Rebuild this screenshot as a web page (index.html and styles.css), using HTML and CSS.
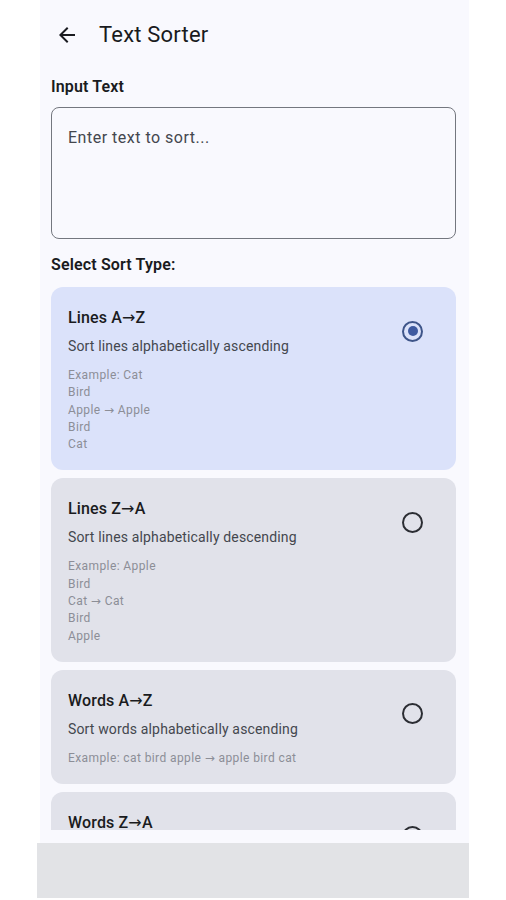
FILE: index.html
```html
<!DOCTYPE html>
<html lang="en">
<head>
<meta charset="utf-8">
<title>Text Sorter</title>
<link rel="stylesheet" href="styles.css">
</head>
<body>
<div class="app">
  <header class="topbar">
    <span class="back" aria-label="Back">
      <svg viewBox="0 0 24 24" width="24" height="24"><path d="M20 11H7.83l5.59-5.59L12 4l-8 8 8 8 1.41-1.41L7.83 13H20v-2z" fill="#1a1b20"/></svg>
    </span>
    <h1 class="title">Text Sorter</h1>
  </header>
  <main class="content">
    <div class="label">Input Text</div>
    <div class="field"><span class="placeholder">Enter text to sort...</span></div>
    <div class="label section">Select Sort Type:</div>
    <div class="cards">
      <div class="card selected">
        <div class="row">
          <div class="texts">
            <div class="card-title">Lines A→Z</div>
            <div class="card-desc">Sort lines alphabetically ascending</div>
          </div>
          <span class="radio on"></span>
        </div>
        <div class="example">Example: Cat
Bird
Apple → Apple
Bird
Cat</div>
      </div>
      <div class="card">
        <div class="row">
          <div class="texts">
            <div class="card-title">Lines Z→A</div>
            <div class="card-desc">Sort lines alphabetically descending</div>
          </div>
          <span class="radio"></span>
        </div>
        <div class="example">Example: Apple
Bird
Cat → Cat
Bird
Apple</div>
      </div>
      <div class="card">
        <div class="row">
          <div class="texts">
            <div class="card-title">Words A→Z</div>
            <div class="card-desc">Sort words alphabetically ascending</div>
          </div>
          <span class="radio"></span>
        </div>
        <div class="example">Example: cat bird apple → apple bird cat</div>
      </div>
      <div class="card">
        <div class="row">
          <div class="texts">
            <div class="card-title">Words Z→A</div>
            <div class="card-desc">Sort words alphabetically descending</div>
          </div>
          <span class="radio"></span>
        </div>
        <div class="example">Example: cat bird apple → cat bird apple</div>
      </div>
    </div>
  </main>
  <div class="bottom">
    <div class="navbar"></div>
  </div>
</div>
</body>
</html>
```
FILE: styles.css
```css
* { box-sizing: border-box; }
html, body { margin: 0; padding: 0; background: #ffffff; }
body {
  font-family: Roboto, "Noto Sans", "DejaVu Sans", sans-serif;
  color: #1a1b20;
}
.app {
  margin-left: 40px;
  width: 429px;
  height: 898px;
  background: #f9f9fe;
  display: flex;
  flex-direction: column;
}
.topbar {
  height: 69px;
  flex: none;
  display: flex;
  align-items: center;
  padding-left: 15px;
}
.back {
  width: 24px;
  height: 24px;
  display: flex;
}
.title {
  margin: 0 0 0 20px;
  font-size: 22px;
  line-height: 28px;
  font-weight: 400;
  letter-spacing: 0.2px;
  color: #1a1b20;
}
.content {
  flex: 1;
  overflow: hidden;
  padding: 6px 13px 0 11px;
  display: flex;
  flex-direction: column;
}
.label {
  font-size: 16px;
  line-height: 24px;
  font-weight: 600;
  letter-spacing: 0.15px;
  color: #1a1b20;
}
.field {
  margin-top: 8px;
  height: 132px;
  flex: none;
  border: 1px solid #74777f;
  border-radius: 8px;
  padding: 18px 16px;
}
.placeholder {
  font-size: 16px;
  line-height: 24px;
  letter-spacing: 0.5px;
  color: #44474e;
}
.section { margin-top: 14px; }
.cards {
  margin-top: 10px;
  display: flex;
  flex-direction: column;
  gap: 8px;
}
.card {
  flex: none;
  background: #e1e2ea;
  border-radius: 12px;
  padding: 19px 20px 17px 17px;
}
.card.selected { background: #dbe2fa; }
.row {
  display: flex;
  align-items: center;
  justify-content: space-between;
}
.card-title {
  font-size: 16px;
  line-height: 24px;
  font-weight: 500;
  letter-spacing: 0.15px;
  color: #1a1b20;
}
.card-desc {
  margin-top: 6px;
  font-size: 14px;
  line-height: 20px;
  letter-spacing: 0.15px;
  color: #44474e;
}
.radio {
  width: 21px;
  height: 21px;
  margin-right: 13px;
  border: 2px solid #2b2d33;
  border-radius: 50%;
  display: flex;
  align-items: center;
  justify-content: center;
}
.radio.on { border-color: #3e5589; }
.radio.on::after {
  content: "";
  width: 10px;
  height: 10px;
  border-radius: 50%;
  background: #3e5aa0;
}
.example {
  margin-top: 11px;
  font-size: 12px;
  line-height: 17.3px;
  letter-spacing: 0.4px;
  color: #8c8e97;
  white-space: pre-line;
}
.bottom {
  flex: none;
  padding-top: 13px;
}
.navbar {
  height: 55px;
  margin-left: -3px;
  background: #e2e3e6;
}
```
